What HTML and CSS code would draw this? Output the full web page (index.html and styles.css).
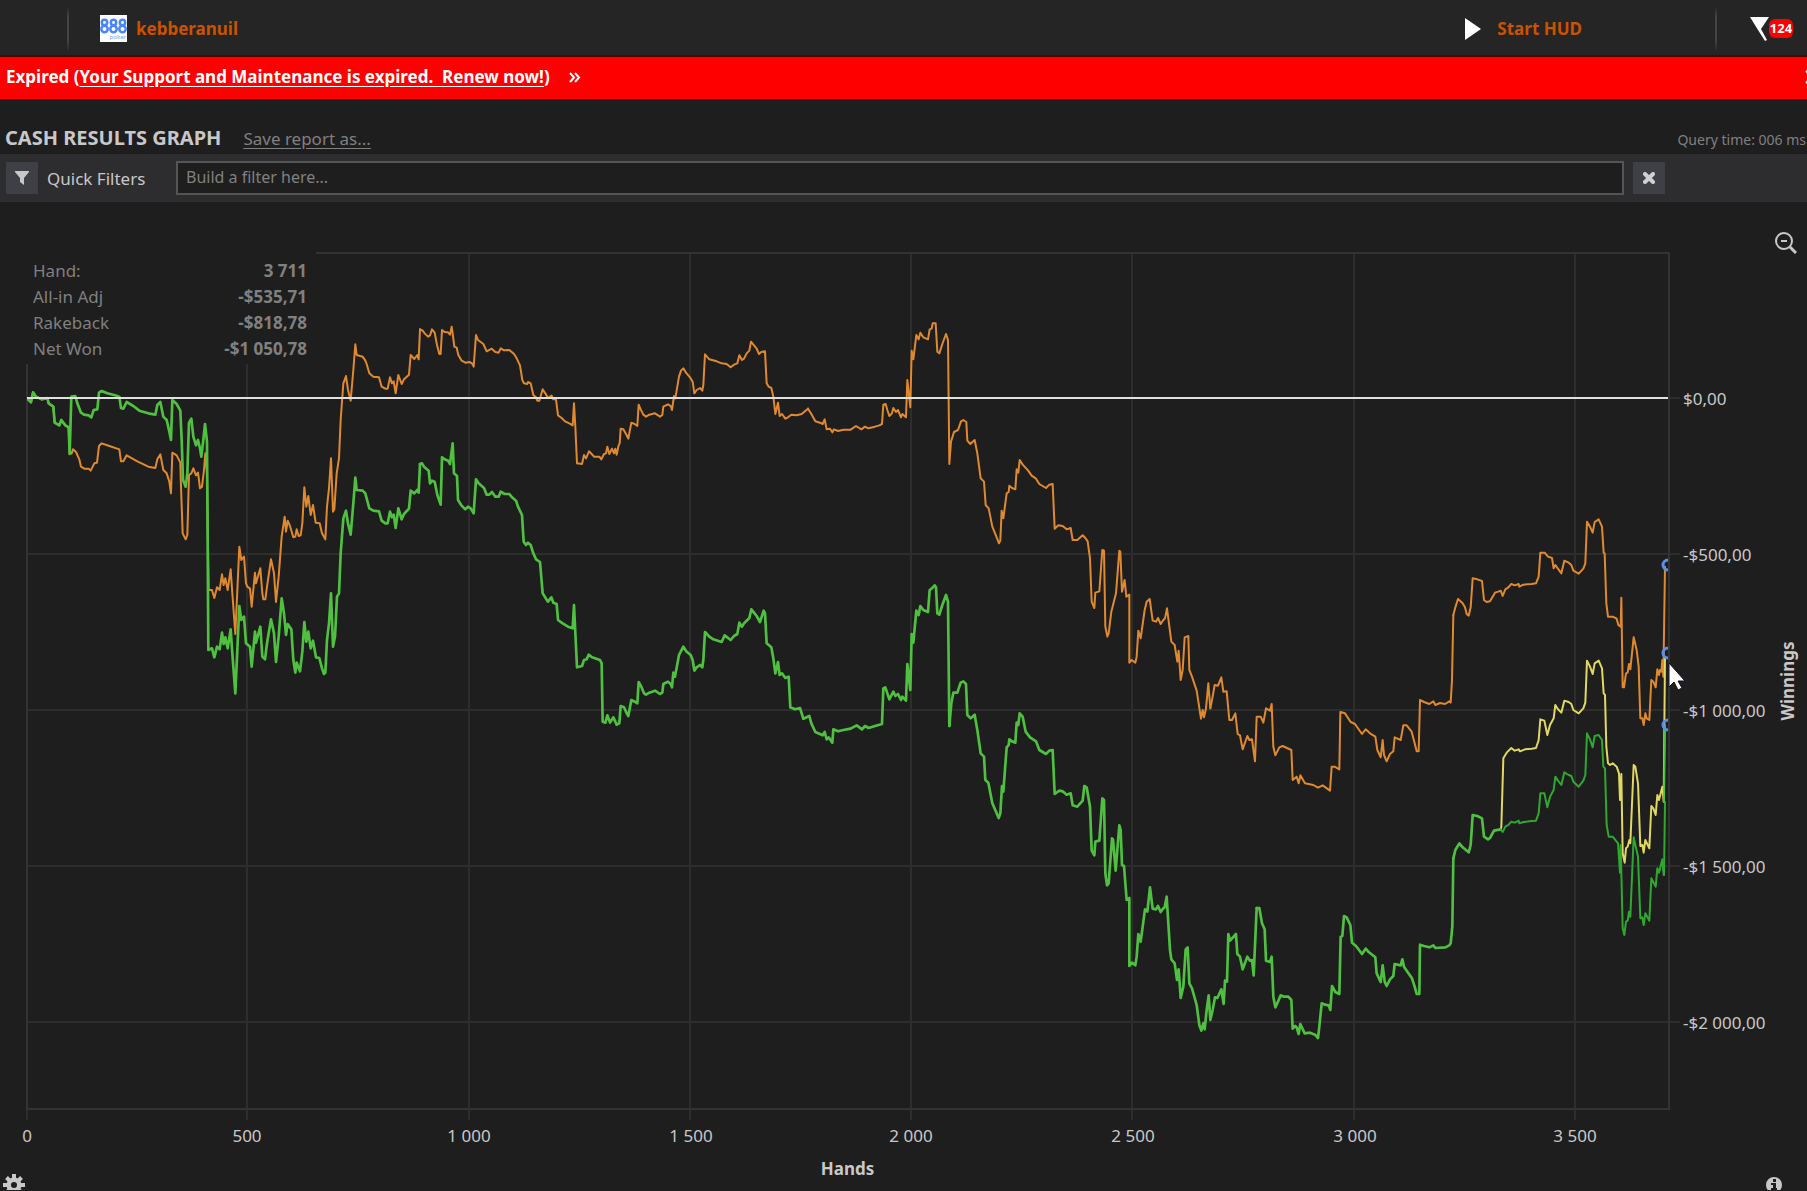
FILE: index.html
```html
<!DOCTYPE html>
<html lang="en">
<head>
<meta charset="utf-8">
<title>Cash Results Graph</title>
<link rel="stylesheet" href="styles.css">
</head>
<body>
<header class="topbar">
  <span class="divider divider-first"></span>
  <a class="player" href="#player">
    <svg class="room-logo" viewBox="0 0 27 27" aria-hidden="true">
      <rect width="27" height="27" fill="#fff"/>
      <g fill="none" stroke="#4a86f7" stroke-width="2.500">
        <circle cx="4.500" cy="7.500" r="2.700"/><circle cx="13.500" cy="7.500" r="2.700"/><circle cx="22.500" cy="7.500" r="2.700"/>
        <circle cx="4.500" cy="14" r="3.200"/><circle cx="13.500" cy="14" r="3.200"/><circle cx="22.500" cy="14" r="3.200"/>
      </g>
      <text x="26" y="24" class="logo-word">poker</text>
    </svg>
    <span>kebberanuil</span>
  </a>
  <button class="hud" type="button">
    <svg width="16" height="22" viewBox="0 0 16 22" aria-hidden="true"><path d="M0 0L16 11L0 22Z" fill="#fff"/></svg>
    <span>Start HUD</span>
  </button>
  <span class="divider"></span>
  <button class="alerts" type="button" aria-label="Notifications">
    <svg width="19" height="24" viewBox="0 0 19 24" aria-hidden="true"><path d="M0 0H19L11 12L17 23L15 24L8 13Z" fill="#fff"/></svg>
    <span class="badge">124</span>
  </button>
</header>

<div class="notice">
  <span>Expired (<a href="#renew">Your Support and Maintenance is expired.&nbsp; Renew now!</a>)</span>
  <svg width="12" height="11" viewBox="0 0 12 11" aria-hidden="true"><path d="M1 1L5 5.500L1 10M6 1L10 5.500L6 10" fill="none" stroke="#fff" stroke-width="2"/></svg>
  <button class="dismiss" type="button" aria-label="Dismiss">
    <svg width="14" height="14" viewBox="0 0 14 14" aria-hidden="true"><path d="M1 1L13 13M13 1L1 13" stroke="#fff" stroke-width="2"/></svg>
  </button>
</div>

<div class="report-head">
  <h1>CASH RESULTS GRAPH</h1>
  <a href="#save">Save report as...</a>
  <span class="query-time">Query time: 006 ms</span>
</div>

<div class="filters">
  <button class="square" type="button" aria-label="Filters">
    <svg width="14" height="14" viewBox="0 0 14 14" aria-hidden="true"><path d="M0 0H14V1L9 7V14L5 11V7L0 1Z" fill="#c8c8c8"/></svg>
  </button>
  <label for="filter">Quick Filters</label>
  <input id="filter" type="text" placeholder="Build a filter here...">
  <button class="square" type="button" aria-label="Clear filter">
    <svg width="12" height="12" viewBox="0 0 12 12" aria-hidden="true"><path d="M2 2L10 10M10 2L2 10" stroke="#d0d0d0" stroke-width="4" stroke-linecap="round"/></svg>
  </button>
</div>

<main class="chart">
  <svg class="plot" viewBox="0 202 1807 953" role="img" aria-label="Winnings by hands played">
    <defs><clipPath id="area"><rect x="27" y="253" width="1641" height="856"/></clipPath></defs>
    <g class="grid">
      <path d="M247 253V1120M469 253V1120M690 253V1120M911 253V1120M1132 253V1120M1354 253V1120M1575 253V1120"/>
      <path d="M27 554H1680M27 710H1680M27 866H1680M27 1022H1680M1669 398H1680"/>
      <path d="M27 1109V1120"/>
      <rect x="27" y="253" width="1642" height="856" class="frame"/>
    </g>

    <g clip-path="url(#area)">
      <g class="series adjusted">
        <polyline transform="translate(0 240) scale(.33333)" points="84,478 93,487 99,457 108,470 125,478 142,474 146,490 160,500 164,548 178,556 184,540 196,556 206,562 209,642 215,640 219,628 228,636 238,658 243,680 253,686 266,686 272,692 278,680 283,670 291,668 297,618 305,610 328,618 358,628 363,664 370,664 380,646 412,664 445,680 466,684 472,658 481,643 490,690 500,700 508,725 513,760 517,638 530,646 541,668 543,740 548,880 557,898 562,885 567,705 574,700 580,685 588,706 594,698 600,745 606,740 612,690 616,640 621,700 626,1050 636,1050 643,1074 651,1042 659,1050 666,1003 671,1035 676,1015 683,1050 692,988 697,1060 706,1182 718,920 724,960 732,950 738,1030 742,1040 750,1046 755,1100 765,998 768,1030 781,985 787,1060 790,1078 796,1078 801,1040 813,958 822,1000 828,1086 836,1010 845,890 854,830 858,875 863,842 870,858 880,892 886,890 890,868 896,888 902,886 907,850 913,742 919,800 925,768 932,825 939,795 947,848 959,850 966,880 976,898 981,800 987,745 993,655 999,815 1003,808 1010,700 1017,655 1022,540 1030,430 1038,408 1044,450 1052,482 1060,390 1066,313 1070,345 1088,350 1096,362 1100,372 1108,400 1120,410 1137,412 1145,440 1156,446 1163,446 1170,412 1176,430 1181,424 1187,460 1195,405 1205,432 1212,418 1227,404 1232,345 1243,357 1252,345 1256,358 1260,268"/>
        <polyline transform="translate(400 300) scale(.33333)" points="60,88 68,92 74,100 84,110 90,106 96,88 104,98 111,135 118,162 122,162 126,90 134,96 144,97 150,104 155,80 158,100 163,140 170,143 175,165 185,182 196,188 208,186 216,190 221,200 228,105 234,120 250,132 260,154 275,146 286,156 296,158 302,145 312,151 328,150 342,162 350,175 360,196 367,240 372,250 382,252 384,246 392,250 400,285 408,292 412,302 418,302 428,268 436,280 444,294 455,287 460,298 468,298 474,346 485,354 495,364 508,370 518,376 522,310 526,380 531,490 546,492 552,465 558,475 567,454 575,462 582,470 598,470 604,478 612,462 618,460 622,440 628,462 636,446 642,460 646,446 650,464 656,436 659,430 662,386 670,388 678,402 685,416 694,368 704,372 712,378 716,314 722,328 730,344 738,350 748,344 765,340 780,350 787,345 790,320 804,313 812,318 816,330 822,288 826,295 837,230 843,212 850,205 858,218 870,232 878,245 883,280 890,270 900,264 907,272 910,255 915,163 928,178 950,184 965,190 980,192 992,202 1002,194 1012,190 1018,166 1026,180 1032,176 1040,160 1048,152 1053,125 1062,136 1070,146 1077,162 1084,156 1095,154 1100,250 1106,260 1114,264 1120,290 1126,342 1134,308 1139,348 1146,342 1156,356 1164,352 1174,344 1190,346 1205,342 1224,326"/>
        <polyline transform="translate(800 300) scale(.33333)" points="24,326 34,342 46,364 60,368 68,372 74,358 80,388 90,386 97,397 102,388 114,393 130,389 152,389 168,378 184,388 195,380 205,385 225,380 238,376 246,372 250,314 257,312 262,330 268,348 276,340 280,324 288,336 294,330 303,352 307,342 318,352 322,240 331,322 335,152 340,178 349,105 356,118 361,98 370,112 384,118 389,88 395,86 398,70 407,70 412,155 418,160 427,132 438,102 444,120 448,492 453,425 462,396 474,390 483,364 490,360 499,366 502,422 511,432 524,420 532,460 542,535 552,545 557,615 566,625 577,680 590,712 597,730 601,722 605,632 610,655 620,580 626,576 628,557 636,564 646,568 650,508 655,518 659,480 668,494 684,511 695,527 708,536 718,552 738,564 748,554 758,552 764,686 775,676 788,678 800,688 812,684 818,720 832,720 848,706 856,714 863,724 870,775 875,905 883,924 886,878 898,874 907,750 912,752 916,980 922,1010 926,1000 934,935 948,880 958,752 961,755 966,875 974,840 979,890 988,884 988,1088 995,1080 1006,1088 1010,1070 1015,992 1022,1015 1034,930 1040,905 1049,897 1058,962 1068,965 1074,954 1082,972 1090,960 1095,955 1101,925 1114,1025 1124,1035 1132,1085 1136,1052 1142,1140 1148,1110 1154,1012 1165,1008 1168,1110 1176,1130 1190,1172 1203,1256 1208,1230 1212,1252 1218,1225 1225,1150 1231,1225"/>
        <polyline transform="translate(1080 540) scale(.33333)" points="391,505 397,475 404,435 414,437 424,412 430,455 440,454 448,540 456,540 466,520 473,582 480,586 488,628 502,588 508,600 516,598 525,664 530,530 542,530 550,548 558,505 570,512 575,492 580,620 586,646 598,622 608,618 634,630 638,720 650,710 656,730 661,706 675,730 700,735 714,743 728,736 750,752 755,680 764,680 778,688 781,516 795,520 812,546 825,552 846,582 857,568 870,580 886,590 892,630 902,652 908,600 912,645 920,664 930,642 940,634 944,592 962,600 970,556 980,556 995,575 1004,610 1010,634 1016,634 1020,480 1032,486 1048,492 1060,484 1066,495 1080,489 1095,492 1108,484 1112,488 1116,420 1120,225"/>
        <polyline transform="translate(1440 500) scale(.33333)" points="40,345 46,322 54,297 68,310 75,322 80,342 86,347 92,322 98,235 112,238 126,243 132,300 140,306 150,304 165,278 175,275 182,272 188,288 196,268 205,262 214,252 224,256 236,252 238,260 250,254 275,252 288,250 296,230 301,158 314,158 324,170 336,174 341,205 346,195 364,220 373,182 386,188 394,195 400,212 416,221 430,206 436,190 441,65 450,80 458,98 464,66 476,58 486,80 491,158 494,160 499,310 504,350 518,350 530,356 535,375 542,380 544,293 548,562 552,562 558,520 563,518 567,492 571,508 581,412 590,450 596,500 601,655 607,655 611,675 616,640 620,655 628,660 634,540 640,545 647,562 652,508 657,525 660,510 664,515 667,480 670,530 675,200"/>
      </g>
      <g class="series net">
        <polyline transform="translate(0 240) scale(.33333)" points="84,478 93,487 99,457 108,470 125,478 142,474 146,490 160,500 164,548 178,556 184,540 196,556 206,562 209,642 214,470 226,468 232,490 243,518 252,524 266,526 274,532 281,510 292,508 297,458 305,453 322,460 345,466 358,470 363,504 370,506 380,486 400,498 418,512 445,520 466,524 472,495 481,486 490,530 500,540 508,575 513,600 517,480 530,492 541,512 545,600 549,720 557,740 562,700 567,548 574,536 580,590 588,616 594,600 600,625 604,650 610,600 615,552 621,605 625,1230 636,1225 643,1252 651,1220 659,1228 666,1178 671,1212 676,1192 683,1225 692,1168 697,1240 706,1360 718,1098 724,1140 732,1130 738,1210 750,1220 755,1280 765,1175 768,1208 781,1160 787,1250 795,1258 801,1210 813,1138 822,1180 828,1266 836,1190 845,1075 852,1120 858,1185 863,1152 874,1168 880,1260 886,1298 890,1268 900,1294 907,1235 913,1146 919,1205 925,1175 932,1225 939,1202 948,1252 958,1254 966,1285 972,1302 976,1298 981,1200 987,1150 993,1060 999,1220 1005,1190 1011,1070 1017,1060 1022,940 1030,835 1038,812 1044,850 1052,884 1060,790 1066,713 1070,750 1088,752 1096,760 1100,775 1108,805 1120,812 1137,814 1145,842 1156,850 1163,850 1170,815 1176,832 1181,824 1187,864 1195,805 1205,838 1212,822 1227,806 1232,752 1243,760 1252,750 1256,758 1260,672"/>
        <polyline transform="translate(400 300) scale(.33333)" points="60,492 66,490 72,500 86,512 90,550 96,542 104,545 112,585 122,614 126,472 134,478 144,482 150,492 158,430 162,520 171,528 174,600 184,616 196,628 204,620 212,625 221,640 228,538 236,550 252,564 260,584 268,584 276,576 286,590 296,590 302,575 314,582 328,582 336,592 348,602 354,620 366,645 371,725 378,735 384,728 392,735 400,760 408,778 420,786 428,880 438,896 444,905 454,892 460,908 470,912 474,960 488,970 504,980 518,985 522,915 531,1102 546,1098 552,1080 560,1078 566,1064 576,1072 600,1080 605,1090 608,1265 616,1268 622,1246 630,1268 640,1252 650,1274 658,1270 662,1218 672,1222 680,1240 685,1248 694,1200 706,1206 712,1210 716,1146 724,1160 732,1180 738,1184 748,1178 765,1172 780,1182 787,1178 790,1152 804,1145 812,1152 816,1162 820,1118 825,1130 837,1065 850,1040 860,1055 872,1065 878,1080 883,1112 890,1102 900,1095 907,1102 910,1080 915,996 928,1010 940,1018 965,1026 974,1006 992,1020 1002,1008 1012,1002 1018,968 1026,980 1032,970 1048,954 1054,928 1062,938 1070,948 1080,966 1091,932 1095,940 1100,1030 1114,1042 1120,1075 1126,1120 1134,1086 1139,1125 1146,1120 1156,1134 1166,1130 1171,1222 1185,1228 1200,1224 1210,1256"/>
        <polyline transform="translate(800 300) scale(.33333)" points="10,1256 28,1248 34,1270 46,1296 60,1302 68,1306 74,1296 80,1318 86,1312 97,1328 100,1288 114,1294 130,1290 152,1286 170,1276 186,1288 195,1278 206,1284 225,1278 246,1272 250,1165 256,1162 262,1180 268,1198 280,1175 286,1188 294,1182 303,1200 307,1190 318,1202 322,1092 331,1170 335,1002 340,1028 349,932 356,945 361,918 370,930 384,936 389,870 395,866 404,856 408,862 412,940 418,944 427,915 438,885 444,905 448,1278"/>
        <polyline transform="translate(940 660) scale(.33333)" points="28,198 34,130 40,98 52,98 62,68 70,64 78,72 82,165 92,175 104,164 112,210 122,280 132,290 136,360 145,368 157,430 170,460 176,474 181,460 186,378 190,395 200,262 206,255 208,238 216,244 226,248 230,188 235,195 239,160 248,170 257,215 270,232 288,244 298,270 318,282 328,272 338,270 344,402 358,392 368,394 380,404 392,400 398,436 412,440 428,422 433,378 440,382 450,440 455,572 463,586 466,545 478,542 487,415 492,420 496,640 501,676 506,670 516,535 519,538 527,632 538,496 542,510 546,615 552,618 560,720 568,714 568,918 576,908 586,916 590,890 595,822 602,845 615,748 622,755 630,682 638,746 648,748 654,738 662,756 670,745 674,742 680,710 690,870 694,898 704,910 711,960 716,928 722,1014 730,980 737,868 743,862 748,970 756,985 770,1035 778,1095 784,1112 790,1090 794,1108 800,1050 806,1006 811,1080 818,1050 825,1012 832,1014 844,988 851,1032 855,962 861,965 865,822 870,842 888,822 892,882 900,890 908,928 922,890 930,902 936,900 941,946 950,744"/>
        <polyline transform="translate(1080 540) scale(.33333)" points="530,1104 538,1104 546,1150 554,1168 558,1262 570,1266 575,1250 580,1370 586,1402 594,1385 602,1366 612,1370 625,1370 634,1380 638,1466 646,1458 650,1462 656,1482 661,1452 674,1480 690,1478 705,1484 714,1494 718,1460 725,1390 735,1394 746,1396 751,1410 756,1338 766,1356 778,1362 782,1190 787,1188 792,1128 800,1132 811,1155 816,1208 828,1218 846,1242 857,1226 866,1236 886,1252 890,1300 902,1326 908,1276 914,1325 920,1338 930,1318 940,1308 944,1272 962,1276 967,1258 972,1280 980,1292 996,1315 1004,1340 1010,1362 1018,1362 1020,1214 1032,1218 1048,1222 1060,1216 1066,1224 1096,1222 1108,1216 1112,1210 1117,1160 1120,955"/>
        <polyline transform="translate(1440 500) scale(.33333)" points="40,1075 46,1050 58,1030 68,1042 86,1057 92,1035 98,945 112,948 126,955 132,1010 144,1018 150,1014 162,992 182,988"/>
      </g>
      <g class="series rakeback">
        <polyline transform="translate(1440 500) scale(.33333)" points="182,988 184,980 190,775 200,758 214,744 224,752 236,748 240,754 255,748 275,746 288,744 296,720 301,658 313,662 322,705 330,675 341,655 346,615 354,628 364,638 373,602 386,606 394,612 400,630 416,640 430,625 436,608 441,482 450,500 458,522 464,490 476,482 486,505 491,580 495,585 499,740 504,790 510,795 518,790 530,800 537,820 540,900 544,822 548,1060 554,1088 558,1045 563,1040 568,1020 571,1030 581,795 586,800 594,850 601,1038 607,1035 611,1058 616,1020 628,1045 634,918 640,925 647,945 652,885 657,900 667,860 671,905 675,470"/>
      </g>
      <g class="series won">
        <polyline transform="translate(1440 500) scale(.33333)" points="182,988 188,996 196,980 205,975 214,965 224,968 236,962 238,970 250,966 275,963 288,962 296,940 301,880 313,880 322,922 330,890 341,870 346,830 354,842 364,855 373,817 386,825 394,828 400,845 416,860 430,842 436,825 441,700 450,718 458,742 464,708 476,705 486,720 490,800 495,805 500,975 506,1010 518,1010 534,1030 540,1118 542,1035 548,1285 553,1305 558,1265 563,1262 567,1235 571,1250 581,1012 594,1070 601,1255 607,1252 611,1275 616,1240 628,1262 634,1135 647,1160 652,1105 657,1118 667,1078 671,1125"/>
        <path d="M1664 875L1665 802"/>
        <path class="overlap" d="M1664 802L1665 726"/>
      </g>
      <path class="zero" d="M27 398H1668"/>
      <g class="markers"><circle cx="1668" cy="565" r="5"/><circle cx="1668" cy="653" r="5"/><circle cx="1668" cy="725" r="5"/></g>
    </g>

    <g class="axis x-axis">
      <text x="27" y="1142">0</text><text x="247" y="1142">500</text><text x="469" y="1142">1 000</text><text x="691" y="1142">1 500</text><text x="911" y="1142">2 000</text><text x="1133" y="1142">2 500</text><text x="1355" y="1142">3 000</text><text x="1575" y="1142">3 500</text>
    </g>
    <g class="axis">
      <text x="1683" y="405">$0,00</text><text x="1683" y="561">-$500,00</text><text x="1683" y="717">-$1 000,00</text><text x="1683" y="873">-$1 500,00</text><text x="1683" y="1029">-$2 000,00</text>
    </g>
    <text class="axis-title" transform="translate(1794 681) rotate(-90)">Winnings</text>
    <path class="pointer" d="M1669 663V687L1674 682L1678 690L1682 688L1678 681H1685Z"/>
  </svg>

  <button class="zoom-out" type="button" aria-label="Zoom out">
    <svg width="22" height="22" viewBox="0 0 22 22" aria-hidden="true"><g fill="none" stroke="#c8c8c8"><circle cx="9" cy="9" r="8" stroke-width="2"/><path d="M6 9H12" stroke-width="2"/><path d="M15 15L21 21" stroke-width="3"/></g></svg>
  </button>

  <table class="legend">
    <tr><th scope="row">Hand:</th><td>3 711</td></tr>
    <tr><th scope="row">All-in Adj</th><td>-$535,71</td></tr>
    <tr><th scope="row">Rakeback</th><td>-$818,78</td></tr>
    <tr><th scope="row">Net Won</th><td>-$1 050,78</td></tr>
  </table>
</main>

<footer class="footer">
  <button class="plain" type="button" aria-label="Settings">
    <svg width="22" height="22" viewBox="-11 -11 22 22" aria-hidden="true"><g stroke="#c8c8c8" stroke-width="4"><path d="M0 -11V11M-11 0H11M-7.500 -7.500L7.500 7.500M-7.500 7.500L7.500 -7.500"/></g><circle r="7.500" fill="#c8c8c8"/><circle r="3" fill="#1e1e1e"/></svg>
  </button>
  <span class="axis-name">Hands</span>
  <button class="plain" type="button" aria-label="Information">
    <svg width="16" height="16" viewBox="0 0 16 16" aria-hidden="true"><circle cx="8" cy="8" r="8" fill="#c8c8c8"/><path d="M7 2H10V5H7ZM5 6H10V11H11V13H5V11H7V8H5Z" fill="#1e1e1e"/></svg>
  </button>
</footer>
</body>
</html>
```
FILE: styles.css
```css
* { box-sizing: border-box; }

body {
  margin: 0;
  background: #1e1e1e;
  color: #c8c8c8;
  font: 17px/24px "Noto Sans", "Open Sans", sans-serif;
  overflow-x: hidden;
}

button {
  margin: 0;
  padding: 0;
  border: 0;
  background: none;
  color: inherit;
  font: inherit;
}

svg { display: block; flex: none; }

.topbar {
  display: flex;
  align-items: center;
  height: 57px;
  padding: 2px 14px 0 0;
  background: #252525;
  border-bottom: 2px solid #5a0000;
  color: #cc5200;
  font-weight: 700;
}

.divider {
  width: 2px;
  height: 46px;
  background: linear-gradient(#252525, #444 25%, #444 75%, #252525);
}

.divider-first { margin: 0 31px 0 67px; }

.player {
  display: flex;
  align-items: center;
  gap: 9px;
  margin-right: auto;
  color: inherit;
  text-decoration: none;
}

.room-logo { width: 27px; height: 27px; }
.logo-word { fill: #6f9ff8; font: 400 6px "Noto Sans", sans-serif; text-anchor: end; }

.hud {
  display: flex;
  align-items: center;
  gap: 16px;
  margin-right: 133px;
}

.alerts {
  display: flex;
  align-items: center;
  margin-left: 33px;
}

.badge {
  width: 24px;
  border-radius: 6px;
  background: #f00;
  color: #fff;
  font-size: 13px;
  line-height: 19px;
  text-align: center;
}

.notice {
  display: flex;
  align-items: center;
  gap: 19px;
  height: 42px;
  padding: 0 0 2px 6px;
  overflow: hidden;
  background: #f00;
  color: #fff;
  font-size: 17px;
  font-weight: 700;
}

.notice a { color: inherit; text-underline-offset: 3px; }
.dismiss { margin: 0 -12px 0 auto; }

.report-head {
  display: flex;
  align-items: baseline;
  gap: 22px;
  height: 55px;
  padding: 27px 1px 0 5px;
}

.report-head h1 { margin: 0; font-size: 20px; }
.report-head a { color: #808080; text-underline-offset: 3px; }
.query-time { margin-left: auto; color: #808080; font-size: 14px; }

.filters {
  display: flex;
  align-items: center;
  height: 48px;
  padding: 0 142px 0 6px;
  background: #2d2d30;
}

.square {
  display: grid;
  place-items: center;
  width: 32px;
  height: 32px;
  background: #3f3f46;
}

.filters label { width: 129px; margin-left: 9px; padding-top: 2px; }

.filters input {
  flex: 1;
  min-width: 0;
  height: 34px;
  margin-right: 9px;
  padding: 0 8px 3px;
  border: 2px solid #555;
  background: #1e1e1e;
  color: #c8c8c8;
  font: inherit;
  font-size: 16px;
}

.filters input::placeholder { color: #808080; opacity: 1; }

.chart { position: relative; }
.plot { width: 100%; height: auto; }

.grid { fill: none; stroke: #2d2d2d; stroke-width: 2; }
.frame { stroke: #333; }

.series { fill: none; stroke-linejoin: round; stroke-linecap: round; }
.adjusted { stroke: #e08a30; stroke-width: 6; }
.net { stroke: #50c040; stroke-width: 8; }
.rakeback { stroke: #e0d862; stroke-width: 6; }
.won { stroke: #2fa832; stroke-width: 6; }
.won path { stroke-width: 2; }
.won .overlap { stroke: #50c040; }

.zero { stroke: #e0e0e0; stroke-width: 2; }
.markers { fill: none; stroke: #5b8fe8; stroke-width: 3; }
.pointer { fill: #fff; stroke: #101020; stroke-width: 1; }

.axis { fill: #c8c8c8; font-size: 17px; }
.x-axis { text-anchor: middle; }
.axis-title { fill: #c8c8c8; font-size: 17px; font-weight: 700; text-anchor: middle; }

.zoom-out {
  position: absolute;
  top: 30px;
  right: 10px;
}

.legend {
  position: absolute;
  top: 50px;
  left: 20px;
  width: 296px;
  padding: 6px 9px 2px 13px;
  border-spacing: 0;
  background: #1e1e1e;
  color: #808080;
}

.legend th, .legend td { padding: 0; line-height: 26px; }
.legend th { font-weight: 400; text-align: left; }
.legend td { font-weight: 700; text-align: right; }

.footer {
  display: grid;
  grid-template-columns: 1fr auto 1fr;
  height: 35px;
  padding: 0 25px 0 3px;
  overflow: hidden;
}

.axis-name { margin-right: 90px; font-weight: 700; line-height: 28px; }
.plain { align-self: start; justify-self: start; margin-top: 19px; }
.plain:last-child { justify-self: end; margin-top: 22px; }
```
